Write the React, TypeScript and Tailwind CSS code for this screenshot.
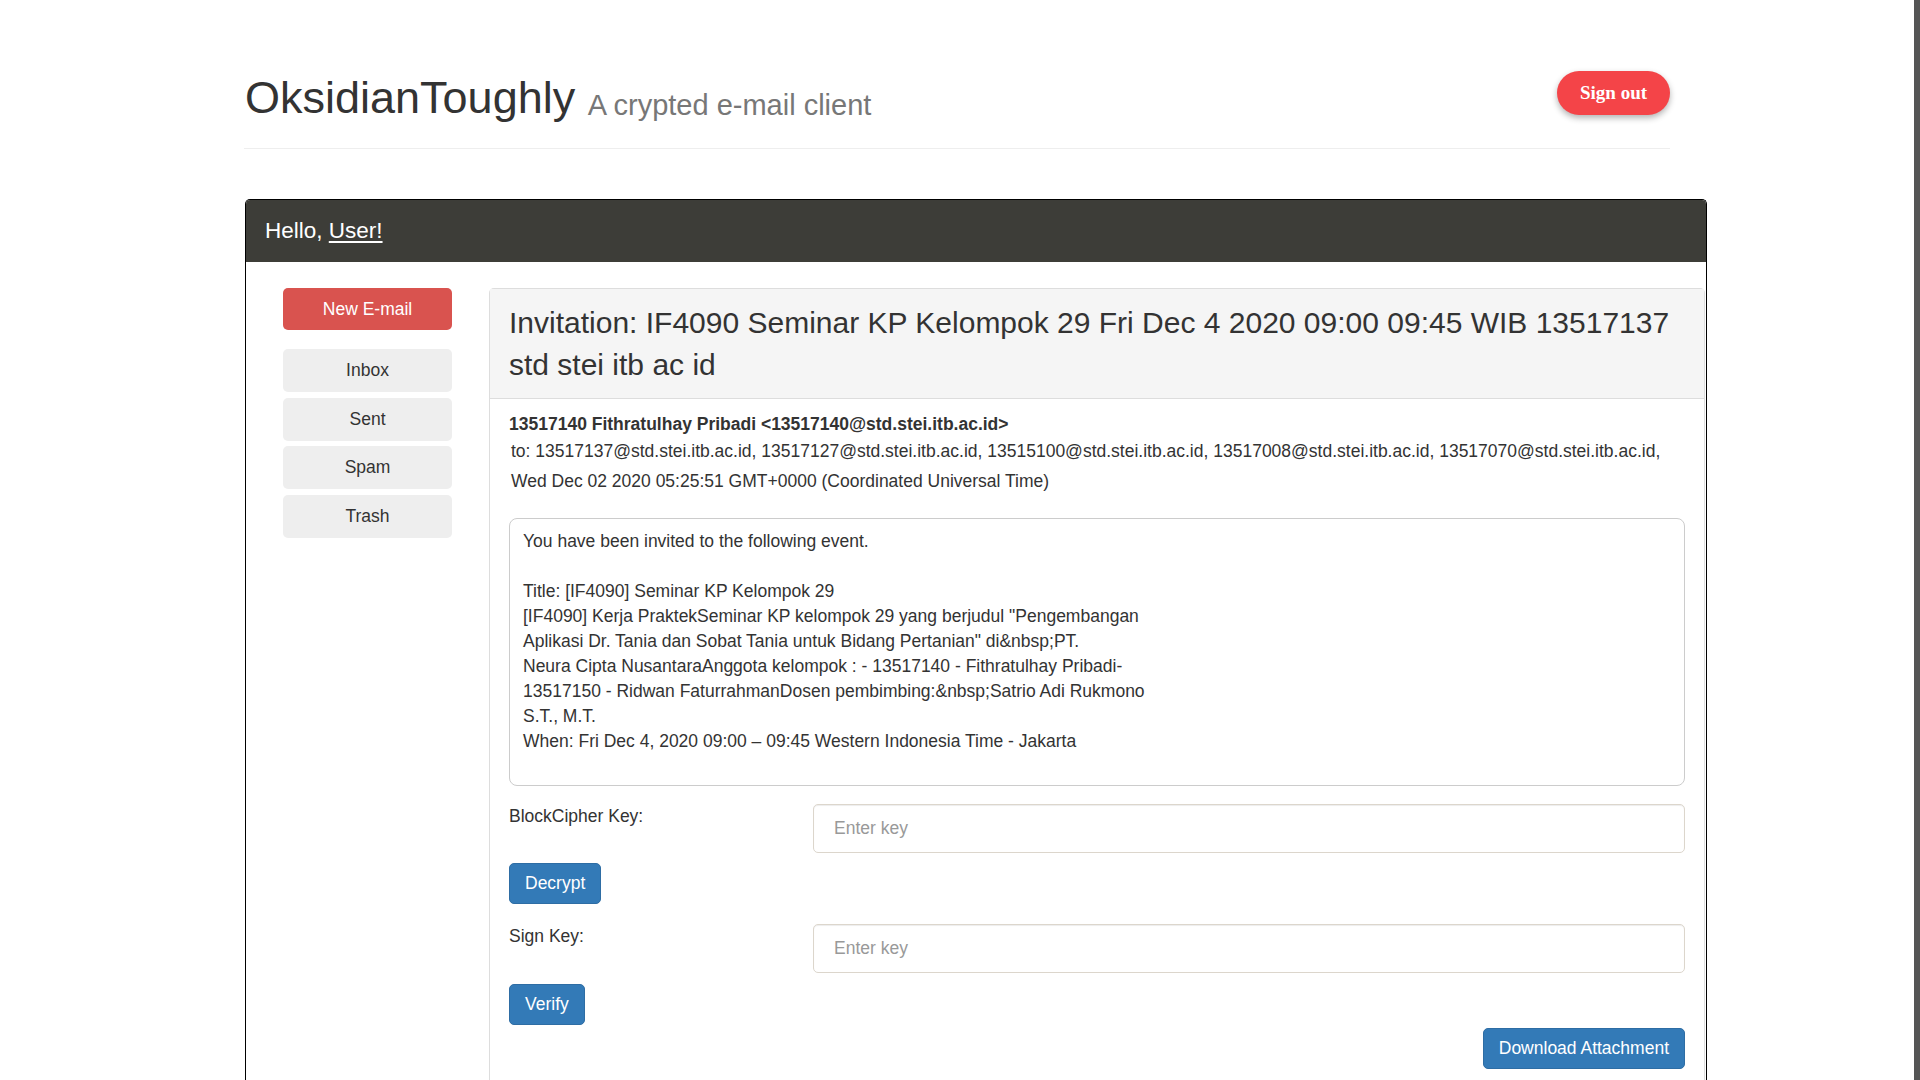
import React from "react";

const folders = ["Inbox", "Sent", "Spam", "Trash"];

const recipients = [
  "13517137@std.stei.itb.ac.id",
  "13517127@std.stei.itb.ac.id",
  "13515100@std.stei.itb.ac.id",
  "13517008@std.stei.itb.ac.id",
  "13517070@std.stei.itb.ac.id",
];

const bodyLines = [
  "You have been invited to the following event.",
  "",
  "Title: [IF4090] Seminar KP Kelompok 29",
  '[IF4090] Kerja PraktekSeminar KP kelompok 29 yang berjudul "Pengembangan',
  'Aplikasi Dr. Tania dan Sobat Tania untuk Bidang Pertanian" di&nbsp;PT.',
  "Neura Cipta NusantaraAnggota kelompok : - 13517140 - Fithratulhay Pribadi-",
  "13517150 - Ridwan FaturrahmanDosen pembimbing:&nbsp;Satrio Adi Rukmono",
  "S.T., M.T.",
  "When: Fri Dec 4, 2020 09:00 – 09:45 Western Indonesia Time - Jakarta",
];

const KeyRow = ({ label, button }: { label: string; button: string }) => (
  <>
    <div className="flex">
      <label className="w-[304px] shrink-0 leading-[25px]">{label}</label>
      <input
        placeholder="Enter key"
        className="h-[49px] flex-1 rounded-[5px] border border-[#dcd6cc] px-[20px] text-[17.5px] text-[#555] shadow-[inset_0_1px_1px_rgba(0,0,0,0.075)] outline-none placeholder:text-[#999]"
      />
    </div>
    <div>
      <button className="mt-[10.5px] h-[41px] rounded-[5px] border border-[#2e6da4] bg-[#337ab7] px-[15px] text-white">
        {button}
      </button>
    </div>
  </>
);

const App = () => {
  return (
    <div className="relative h-screen overflow-hidden bg-white font-['Liberation_Sans',Arial,sans-serif] text-[17.5px] text-[#333]">
      {/* scrollbar strip */}
      <div className="fixed right-0 top-0 h-full w-[6px] bg-[#555]" />

      {/* page header */}
      <div className="ml-[244px] flex h-[149px] w-[1426px] items-start justify-between border-b border-[#eee]">
        <h1 className="mt-[73px] pl-[1px] text-[45px] leading-[50px]">
          OksidianToughly{" "}
          <small className="align-[-2px] text-[29px] text-[#777]">A crypted e-mail client</small>
        </h1>
        <button className="mt-[71px] h-[44px] w-[113px] rounded-full bg-[#f44448] font-['Liberation_Serif',serif] text-[19px] font-bold text-white shadow-[0_3px_6px_rgba(0,0,0,0.3)]">
          Sign out
        </button>
      </div>

      {/* panel */}
      <div className="ml-[245px] mt-[50px] w-[1462px] rounded-t-[5px] border-x border-t border-black">
        <div className="flex h-[62px] items-center rounded-t-[4px] bg-[#3d3d38] pl-[19px] text-[22.5px] text-white">
          Hello,&nbsp;<span className="underline underline-offset-[3px]">User!</span>
        </div>

        <div className="flex pl-[37px] pt-[26px]">
          {/* sidebar */}
          <div className="flex w-[169px] shrink-0 flex-col">
            <button className="mb-[19px] h-[42px] rounded-[5px] bg-[#d9534f] text-white">New E-mail</button>
            <div className="flex flex-col gap-[5.5px]">
              {folders.map((f) => (
                <button key={f} className="h-[43px] rounded-[5px] bg-[#eee] text-[#333]">
                  {f}
                </button>
              ))}
            </div>
          </div>

          {/* message */}
          <div className="ml-[37px] w-[1216px] rounded-t-[5px] border-x border-t border-[#ddd] pb-[20px]">
            <div className="border-b border-[#ddd] bg-[#f5f5f5] px-[19px] py-[12.5px] text-[30px] leading-[42px]">
              Invitation: IF4090 Seminar KP Kelompok 29 Fri Dec 4 2020 09:00 09:45 WIB 13517137 std stei itb ac id
            </div>

            <div className="px-[19px] pt-[13px]">
              <div className="font-bold leading-[25px]">
                13517140 Fithratulhay Pribadi &lt;13517140@std.stei.itb.ac.id&gt;
              </div>
              <div className="mt-[2px] pl-[2px] leading-[25px]">to: {recipients.join(", ")},</div>
              <div className="mt-[5px] pl-[2px] leading-[25px]">
                Wed Dec 02 2020 05:25:51 GMT+0000 (Coordinated Universal Time)
              </div>

              <div className="mt-[23.5px] whitespace-pre rounded-[8px] border border-[#ccc] px-[13px] pb-[31px] pt-[10px] leading-[25px]">
                {bodyLines.map((l, i) => (
                  <div key={i} className="h-[25px]">
                    {l}
                  </div>
                ))}
              </div>

              <div className="mt-[18px]">
                <KeyRow label="BlockCipher Key:" button="Decrypt" />
              </div>
              <div className="mt-[20px]">
                <KeyRow label="Sign Key:" button="Verify" />
              </div>
              <div className="mt-[3px] flex justify-end">
                <button className="h-[41px] rounded-[5px] border border-[#2e6da4] bg-[#337ab7] px-[15px] text-white">
                  Download Attachment
                </button>
              </div>
            </div>
          </div>
        </div>
      </div>
    </div>
  );
};

export default App;
